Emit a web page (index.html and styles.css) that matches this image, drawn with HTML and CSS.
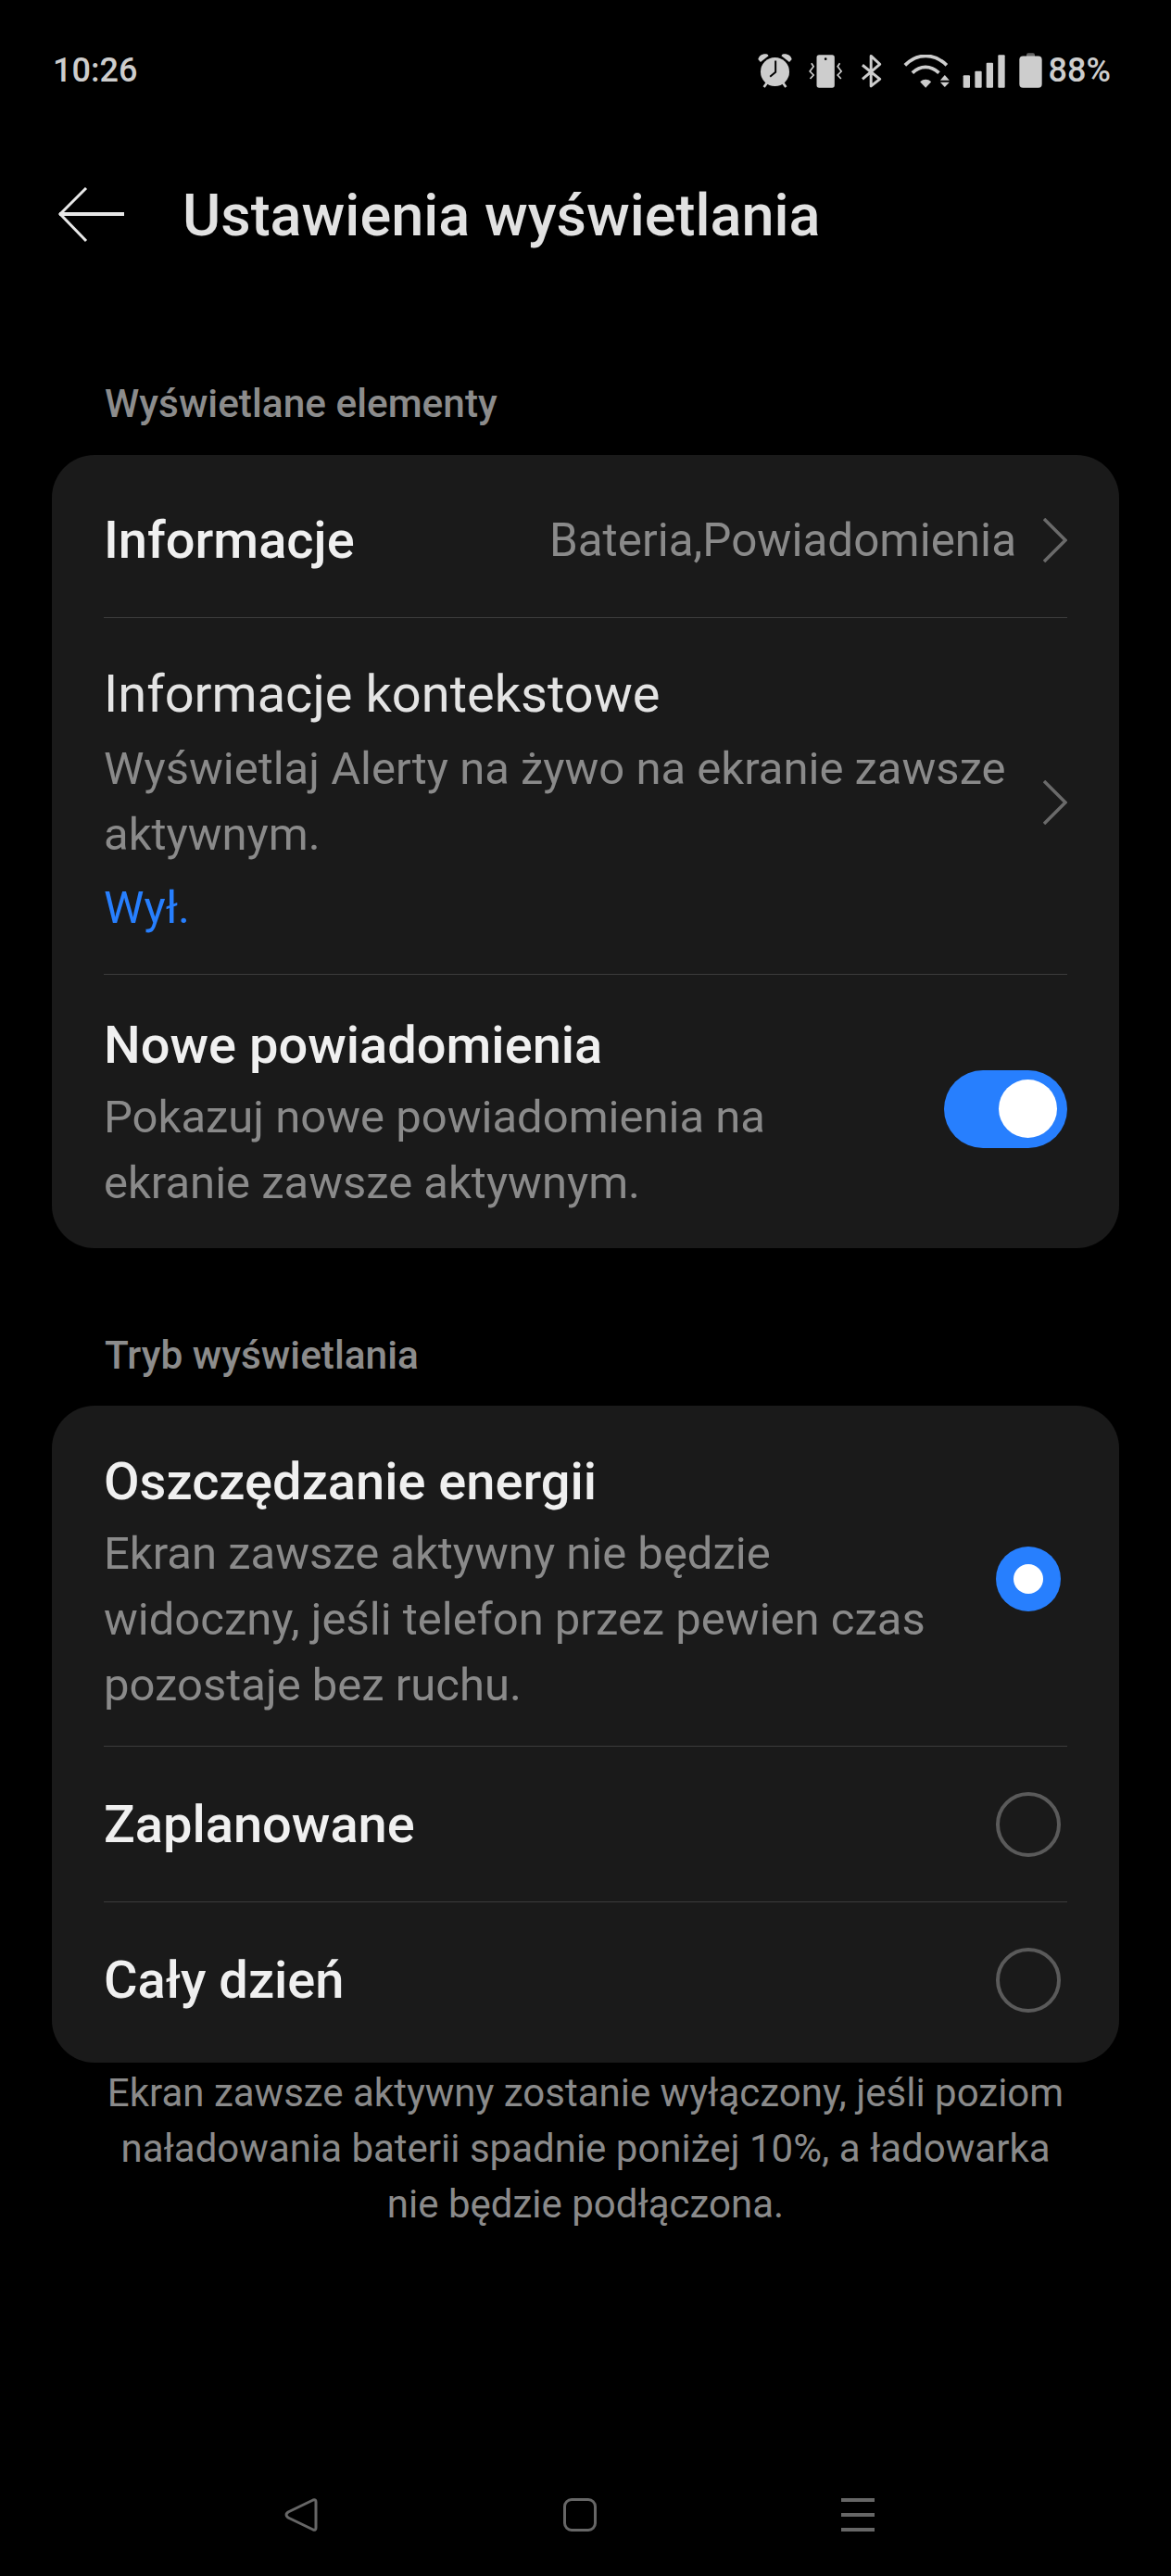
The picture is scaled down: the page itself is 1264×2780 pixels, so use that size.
FILE: index.html
```html
<!DOCTYPE html>
<html lang="pl">
<head>
    <meta charset="UTF-8">
    <meta name="viewport" content="width=device-width, initial-scale=1.0">
    <title>Ustawienia wyświetlania</title>
    <link rel="stylesheet" href="styles.css">
</head>
<body>
    <div class="screen">
        <div class="status-bar">
            <span class="status-time">10:26</span>
            <div class="status-icons">
                <svg class="icon-alarm" viewBox="110 80 112 115" width="37" height="38">
                    <circle cx="166" cy="142" r="47" fill="#cdcdcd"/>
                    <path d="M168 106V143L150 158" fill="none" stroke="#000" stroke-width="6"/>
                    <path d="M111 101C114 88 128 81 142 85L145 90 119 110Z" fill="#cdcdcd"/>
                    <path d="M221 101C218 88 204 81 190 85L187 90 213 110Z" fill="#cdcdcd"/>
                    <path d="M140 178L130 192M192 178L202 192" fill="none" stroke="#cdcdcd" stroke-width="8"/>
                </svg>
                <svg class="icon-vibrate" viewBox="276 84 110 108" width="37" height="36">
                    <rect x="301" y="85" width="58" height="106" rx="8" fill="#cdcdcd"/>
                    <circle cx="330" cy="98" r="4" fill="#000"/>
                    <path d="M284 112L291 122 279 138 291 150 280 162" fill="none" stroke="#cdcdcd" stroke-width="5"/>
                    <path d="M376 112L369 122 381 138 369 150 380 162" fill="none" stroke="#cdcdcd" stroke-width="5"/>
                </svg>
                <svg class="icon-bt" viewBox="446 82 70 110" width="23" height="37">
                    <path d="M452 118L509 164 480 187V88L509 115 452 164" fill="none" stroke="#cdcdcd" stroke-width="9" stroke-linejoin="round"/>
                </svg>
                <svg class="icon-wifi" viewBox="580 84 152 108" width="51" height="36">
                    <path d="M585 118C625 78 680 78 720 118" fill="none" stroke="#cdcdcd" stroke-width="11"/>
                    <path d="M609 143C635 118 668 118 695 143" fill="none" stroke="#cdcdcd" stroke-width="11"/>
                    <path d="M634 172C645 162 659 162 670 172L652 191Z" fill="#cdcdcd"/>
                    <path d="M714 150L729 167H699ZM699 173H729L714 189Z" fill="#cdcdcd"/>
                </svg>
                <svg class="icon-signal" viewBox="770 84 138 107" width="46" height="36">
                    <rect x="772" y="150" width="22" height="41" rx="3" fill="#cdcdcd"/>
                    <rect x="810" y="137" width="22" height="54" rx="3" fill="#cdcdcd"/>
                    <rect x="847" y="110" width="22" height="81" rx="3" fill="#cdcdcd"/>
                    <rect x="885" y="84" width="22" height="107" rx="3" fill="#cdcdcd"/>
                </svg>
                <svg class="icon-battery" viewBox="954 78 75 113" width="25" height="38">
                    <path d="M978 90V84Q978 78 984 78H999Q1005 78 1005 84V90Z" fill="#666"/>
                    <rect x="955" y="88" width="73" height="103" rx="12" fill="#cdcdcd"/>
                </svg>
                <span class="status-percent">88%</span>
            </div>
        </div>

        <div class="title-bar">
            <svg class="back-arrow" viewBox="0 0 72 60" width="72" height="60">
                <path d="M2 29H72" stroke="#e8e8e8" stroke-width="4" fill="none"/>
                <path d="M31 1L3 29 31 58" stroke="#e8e8e8" stroke-width="3" fill="none"/>
            </svg>
            <h1 class="page-title">Ustawienia wyświetlania</h1>
        </div>

        <h2 class="section-label section-first">Wyświetlane elementy</h2>
        <div class="card">
            <div class="row row-info">
                <span class="row-title strong">Informacje</span>
                <span class="row-value">Bateria,Powiadomienia</span>
                <svg class="chevron" viewBox="0 0 26 48" width="26" height="48"><path d="M1 1L24 24 1 47" fill="none" stroke="#6a6a6a" stroke-width="3.500"/></svg>
            </div>
            <div class="row row-context">
                <div class="row-text">
                    <div class="row-title">Informacje kontekstowe</div>
                    <div class="row-sub">Wyświetlaj Alerty na żywo na ekranie zawsze<br>aktywnym.</div>
                    <div class="row-state">Wył.</div>
                </div>
                <svg class="chevron" viewBox="0 0 26 48" width="26" height="48"><path d="M1 1L24 24 1 47" fill="none" stroke="#6a6a6a" stroke-width="3.500"/></svg>
            </div>
            <div class="row row-new">
                <div class="row-text">
                    <div class="row-title strong">Nowe powiadomienia</div>
                    <div class="row-sub">Pokazuj nowe powiadomienia na<br>ekranie zawsze aktywnym.</div>
                </div>
                <div class="toggle"><div class="toggle-knob"></div></div>
            </div>
        </div>

        <h2 class="section-label section-second">Tryb wyświetlania</h2>
        <div class="card">
            <div class="row row-saving">
                <div class="row-text">
                    <div class="row-title strong">Oszczędzanie energii</div>
                    <div class="row-sub">Ekran zawsze aktywny nie będzie<br>widoczny, jeśli telefon przez pewien czas<br>pozostaje bez ruchu.</div>
                </div>
                <div class="radio radio-on"><div class="radio-dot"></div></div>
            </div>
            <div class="row row-plain">
                <span class="row-title strong">Zaplanowane</span>
                <div class="radio"></div>
            </div>
            <div class="row row-plain">
                <span class="row-title strong">Cały dzień</span>
                <div class="radio"></div>
            </div>
        </div>

        <p class="footnote">Ekran zawsze aktywny zostanie wyłączony, jeśli poziom<br>naładowania baterii spadnie poniżej 10%, a ładowarka<br>nie będzie podłączona.</p>

        <div class="nav-bar">
            <svg viewBox="0 0 36 36" width="36" height="36"><path d="M31 2Q34 1 34 4V32Q34 35 31 34L4 21Q0 18 4 15Z" fill="none" stroke="#666" stroke-width="3" stroke-linejoin="round"/></svg>
            <div class="nav-home"></div>
            <div class="nav-menu"><span></span><span></span><span></span></div>
        </div>
    </div>
</body>
</html>
```

FILE: styles.css
```css
* {
    box-sizing: border-box;
}

html, body {
    margin: 0;
    padding: 0;
    background: #000;
}

body {
    font-family: Roboto, "Noto Sans", sans-serif;
    color: #eee;
}

.screen {
    width: 1264px;
    height: 2780px;
    display: flex;
    flex-direction: column;
    overflow: hidden;
}

/* Status bar */
.status-bar {
    display: flex;
    justify-content: space-between;
    align-items: center;
    height: 38px;
    margin-top: 57px;
    padding: 0 65px 0 57px;
    color: #cdcdcd;
    font-weight: 500;
}

.status-time {
    font-size: 36px;
    line-height: 38px;
}

.status-icons {
    display: flex;
    align-items: flex-end;
}

.icon-alarm { margin-right: 18px; }
.icon-vibrate { margin-right: 19px; }
.icon-bt { margin-right: 23px; }
.icon-wifi { margin-right: 13px; }
.icon-signal { margin-right: 15px; }
.icon-battery { margin-right: 7px; }

.status-percent {
    font-size: 36px;
    line-height: 38px;
}

/* Title */
.title-bar {
    display: flex;
    align-items: center;
    height: 60px;
    margin-top: 107px;
    padding-left: 62px;
}

.page-title {
    margin: 0 0 0 63px;
    font-size: 63px;
    font-weight: 500;
    color: #e2e2e2;
}

.section-label {
    margin: 0;
    padding-left: 113px;
    font-size: 42.400px;
    line-height: 46px;
    font-weight: 500;
    color: #8c8c8c;
}

.section-first {
    margin-top: 151px;
    margin-bottom: 32px;
}

.section-second {
    margin-top: 93px;
    margin-bottom: 31px;
}

/* Cards */
.card {
    margin: 0 56px;
    padding: 0 56px;
    background: #1a1a1a;
    border-radius: 46px;
}

.row {
    display: flex;
    align-items: center;
    border-top: 1px solid #3c3c3c;
}

.row:first-child {
    border-top: none;
}

.row-text {
    flex: 1;
    align-self: flex-start;
}

.row-title {
    font-size: 56px;
    line-height: 64px;
    color: #e4e4e4;
}

.row-title.strong {
    font-weight: 500;
    color: #f0f0f0;
}

.row-sub {
    margin-top: 10px;
    font-size: 49px;
    line-height: 71px;
    color: #8a8a8a;
}

.row-state {
    margin-top: 8px;
    font-size: 49px;
    line-height: 71px;
    color: #277ffe;
}

.row-value {
    margin-left: auto;
    margin-right: 29px;
    font-size: 49.400px;
    color: #8a8a8a;
}

.row-info {
    height: 175px;
    padding-top: 9px;
}

.row-context {
    height: 385px;
    padding-top: 50px;
}

.row-context .row-sub {
    margin-top: 13px;
}

.row-context .chevron {
    margin-top: -37px;
}

.row-new {
    height: 296px;
    padding-top: 44px;
}

.row-new .toggle {
    margin-top: -50px;
}

.row-saving {
    height: 367px;
    padding-top: 50px;
}

.row-saving .radio {
    margin-top: -43px;
}

.row-plain {
    height: 168px;
    justify-content: space-between;
}

.row-plain:last-child {
    height: 174px;
    padding-bottom: 6px;
}

.chevron {
    flex: none;
}

/* Toggle and radios */
.toggle {
    width: 133px;
    height: 84px;
    padding: 10px 11px;
    display: flex;
    justify-content: flex-end;
    background: #277ffe;
    border-radius: 42px;
}

.toggle-knob {
    width: 63px;
    height: 63px;
    background: #fff;
    border-radius: 50%;
}

.radio {
    width: 70px;
    height: 70px;
    margin-right: 7px;
    border: 4px solid #5a5a5a;
    border-radius: 50%;
}

.radio-on {
    display: flex;
    align-items: center;
    justify-content: center;
    background: #277ffe;
    border: none;
}

.radio-dot {
    width: 32px;
    height: 32px;
    background: #fff;
    border-radius: 50%;
}

.footnote {
    margin: 3px 0 0;
    text-align: center;
    font-size: 42px;
    line-height: 60px;
    color: #8a8a8a;
}

/* Navigation bar */
.nav-bar {
    display: flex;
    justify-content: space-between;
    align-items: center;
    height: 36px;
    margin-top: auto;
    margin-bottom: 48px;
    padding: 0 320px 0 307px;
}

.nav-home {
    width: 36px;
    height: 36px;
    border: 3px solid #666;
    border-radius: 9px;
}

.nav-menu {
    display: flex;
    flex-direction: column;
    justify-content: space-between;
    width: 36px;
    height: 36px;
}

.nav-menu span {
    height: 4px;
    background: #666;
}
```
